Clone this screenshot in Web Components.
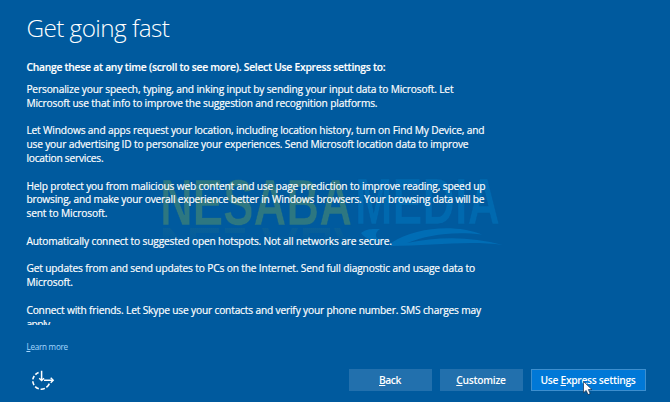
<!DOCTYPE html>
<html lang="en">
<head>
<meta charset="utf-8">
<title>Get going fast</title>
<style>
html,body{margin:0;height:100%;overflow:hidden;background:#005a9e}
</style>
</head>
<body>
<setup-page></setup-page>
<script>
const sheet = (root, html) => { root.attachShadow({mode:'open'}).innerHTML = html; };

/* One line of text whose tracking is adjusted so that it fills a given width. */
customElements.define('fit-line', class extends HTMLElement {
  connectedCallback() {
    if (this.shadowRoot) return;
    sheet(this, `<style>
      :host{display:block;white-space:nowrap}
      span{display:inline-block;white-space:pre}
    </style><span><slot></slot></span>`);
    requestAnimationFrame(() => this.fit());
    this.fit();
  }
  fit() {
    const s = this.shadowRoot.querySelector('span'), w = +this.getAttribute('w');
    const n = this.textContent.length;
    s.style.letterSpacing = '0px';
    const d = (w - s.getBoundingClientRect().width) / n;
    s.style.letterSpacing = d.toFixed(4) + 'px';
  }
});

customElements.define('text-block', class extends HTMLElement {
  connectedCallback() {
    if (this.shadowRoot) return;
    sheet(this, `<style>
      :host{display:block;margin-bottom:13.8px}
    </style><slot></slot>`);
  }
});

customElements.define('setup-button', class extends HTMLElement {
  connectedCallback() {
    if (this.shadowRoot) return;
    sheet(this, `<style>
      :host{display:flex;box-sizing:border-box;height:22px;align-items:center;justify-content:center;
        background:#2270ad;color:#fff;font:600 10.3px/14px "Open Sans",sans-serif;padding-right:1px}
      :host([primary]){background:#0078d7;border:1px solid #3d8fcf}
    </style><slot></slot>`);
  }
});

customElements.define('access-icon', class extends HTMLElement {
  connectedCallback() {
    if (this.shadowRoot) return;
    sheet(this, `<style>:host{display:block;width:24px;height:22px}svg{display:block}</style>
    <svg width="24" height="22" viewBox="0 0 24 22" fill="none" stroke="#fff" stroke-width="1.6">
      <path d="M7.6 2.4A8.7 8.7 0 0 0 4.4 4.6M3.3 6A8.7 8.7 0 0 0 1.8 9.4M1.8 11.3A8.7 8.7 0 0 0 3 15.1M4.2 16.6A8.7 8.7 0 0 0 7.8 18.8M9.6 19.2A8.7 8.7 0 0 0 13.9 18.4M15.4 17.4A8.7 8.7 0 0 0 18.3 13.6"/>
      <path d="M10.6 0.8V10.3M13 10.3H22" stroke-width="1.5"/>
      <path d="M8.2 8.2L10.6 10.5L13 8.2M19.7 7.8L22.2 10.3L19.7 12.8" stroke-width="1.4"/>
    </svg>`);
  }
});

customElements.define('mouse-pointer', class extends HTMLElement {
  connectedCallback() {
    if (this.shadowRoot) return;
    sheet(this, `<style>:host{display:block;width:10px;height:15px}svg{display:block;overflow:visible}</style>
    <svg width="10" height="15" viewBox="0 0 10 15"><path d="M.5.5V11.8L3.2 9.4L5 13.6L7.2 12.6L5.4 8.6H9Z" fill="#fff" stroke="#102a48" stroke-width=".7"/></svg>`);
  }
});

customElements.define('water-mark', class extends HTMLElement {
  connectedCallback() {
    if (this.shadowRoot) return;
    sheet(this, `<style>:host{display:block;width:350px;height:75px;pointer-events:none}svg{display:block}
      text{font:700 64px "Liberation Sans",sans-serif}</style>
    <svg width="350" height="75" viewBox="155 175 350 75">
      <defs>
        <linearGradient id="g" x1="0" x2="0" y1="0" y2="1"><stop offset="0" stop-color="#2d7781" stop-opacity=".2"/><stop offset="1" stop-color="#2d7781" stop-opacity="0"/></linearGradient>
      </defs>
      <text x="160" y="224.5" textLength="192" lengthAdjust="spacingAndGlyphs" fill="#2d7781" stroke="#005a9e" stroke-width=".6">NESABA</text>
      <text x="355" y="224" textLength="145" lengthAdjust="spacingAndGlyphs" fill="#0069af" stroke="#005a9e" stroke-width=".6">MEDIA</text>
      <g fill="url(#g)">
        <path d="M163 228h7l13 15h-8l-6-8v8h-6zM190 228h29v5h-23v10h-6zM225 228h20v5h-20zM262 228h6l4 9h16l4-9h6l-6 15h-24zM303 228h22v5h-16v10h-6zM325 228h5v15h-5zM334 228h6l4 9h7v6h-11z"/>
      </g>
      <path d="M361 233C367 228 374 229 380 229C374 233 374 239 384 243C373 243 366 239 361 233ZM391 243C416 227 455 224 482 234.5C452 231 427 235 407 243C438 236.5 470 236 503 245C468 240 430 246 391 246Z" fill="#006db5"/>
    </svg>`);
  }
});

customElements.define('setup-page', class extends HTMLElement {
  connectedCallback() {
    if (this.shadowRoot) return;
    sheet(this, `<style>
      :host{display:flex;flex-direction:column;position:relative;box-sizing:border-box;width:670px;height:402px;
        padding:0 24px 0 26.4px;background:#005a9e;color:#fff;overflow:hidden;font-family:"Open Sans",sans-serif}
      .title{margin-top:11px;height:34px;font-weight:300;font-size:24.3px;line-height:34px}
      .lead{margin-top:15px;height:14px;font-size:10.3px;line-height:14px;font-weight:600;-webkit-text-stroke:.15px #fff}
      .body{margin-top:9px;height:242px;overflow:hidden;font-size:10.2px;line-height:13.8px;color:#fff;-webkit-text-stroke:.18px #fff}
      .more{margin-top:16px;height:12px;font-size:8.1px;line-height:12px;color:#a6d8ff}
      .foot{display:flex;gap:8px;margin-top:16px;align-items:flex-start}
      access-icon{margin:1px auto 0 5px}
      .b{width:83px}.p{width:115px}
      u{text-underline-offset:1px;text-decoration-thickness:1px}
      water-mark{position:absolute;left:155px;top:175px}
      mouse-pointer{position:absolute;left:583px;top:381px}
      .title,.lead,.body,.more{position:relative;z-index:1}
    </style>
    <water-mark></water-mark>
    <fit-line class="title" w="143">Get going fast</fit-line>
    <fit-line class="lead" w="359">Change these at any time (scroll to see more). Select Use Express settings to:</fit-line>
    <div class="body">
      <text-block><fit-line w="427">Personalize your speech, typing, and inking input by sending your input data to Microsoft. Let</fit-line><fit-line w="351">Microsoft use that info to improve the suggestion and recognition platforms.</fit-line></text-block>
      <text-block><fit-line w="458">Let Windows and apps request your location, including location history, turn on Find My Device, and</fit-line><fit-line w="442">use your advertising ID to personalize your experiences. Send Microsoft location data to improve</fit-line><fit-line w="77">location services.</fit-line></text-block>
      <text-block><fit-line w="459">Help protect you from malicious web content and use page prediction to improve reading, speed up</fit-line><fit-line w="458">browsing, and make your overall experience better in Windows browsers. Your browsing data will be</fit-line><fit-line w="81">sent to Microsoft.</fit-line></text-block>
      <text-block><fit-line w="365.5">Automatically connect to suggested open hotspots. Not all networks are secure.</fit-line></text-block>
      <text-block><fit-line w="448.5">Get updates from and send updates to PCs on the Internet. Send full diagnostic and usage data to</fit-line><fit-line w="46.5">Microsoft.</fit-line></text-block>
      <text-block><fit-line w="454.5">Connect with friends. Let Skype use your contacts and verify your phone number. SMS charges may</fit-line><fit-line w="25.5">apply.</fit-line></text-block>
    </div>
    <fit-line class="more" w="41.5"><u>L</u>earn more</fit-line>
    <div class="foot">
      <access-icon></access-icon>
      <setup-button class="b"><fit-line w="22"><u>B</u>ack</fit-line></setup-button>
      <setup-button class="b"><fit-line w="49.5"><u>C</u>ustomize</fit-line></setup-button>
      <setup-button class="p" primary><fit-line w="95">Use <u>E</u>xpress settings</fit-line></setup-button>
    </div>
    <mouse-pointer></mouse-pointer>`);
  }
});
</script>
</body>
</html>
